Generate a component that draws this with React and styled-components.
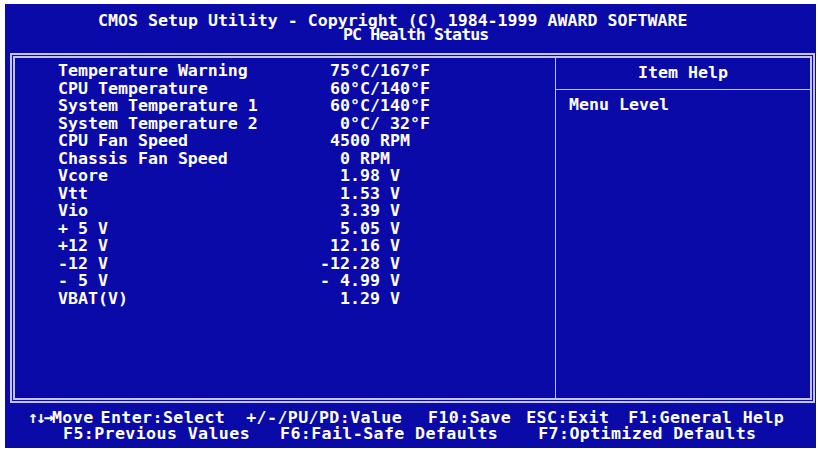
import React from "react";
import styled, { createGlobalStyle } from "styled-components";

const GlobalStyle = createGlobalStyle`
    html, body {
        margin: 0;
        padding: 0;
        background: #ffffff;
    }
`;

const readings = [
    ["Temperature Warning", " 75°C/167°F"],
    ["CPU Temperature", " 60°C/140°F"],
    ["System Temperature 1", " 60°C/140°F"],
    ["System Temperature 2", "  0°C/ 32°F"],
    ["CPU Fan Speed", " 4500 RPM"],
    ["Chassis Fan Speed", "  0 RPM"],
    ["Vcore", "  1.98 V"],
    ["Vtt", "  1.53 V"],
    ["Vio", "  3.39 V"],
    ["+ 5 V", "  5.05 V"],
    ["+12 V", " 12.16 V"],
    ["-12 V", "-12.28 V"],
    ["- 5 V", "- 4.99 V"],
    ["VBAT(V)", "  1.29 V"],
];

// [text, space before it]
const footerTop = [
    ["Enter:Select", 7],
    ["+/-/PU/PD:Value", 21],
    ["F10:Save", 26],
    ["ESC:Exit", 15],
    ["F1:General Help", 19],
];

const footerBottom = [
    ["F5:Previous Values", 58],
    ["F6:Fail-Safe Defaults", 30],
    ["F7:Optimized Defaults", 40],
];

function App() {
    return (
        <>
            <GlobalStyle />
            <Screen>
                <Header>
                    <TitleLine indent={93}>
                        CMOS Setup Utility - Copyright (C) 1984-1999 AWARD SOFTWARE
                    </TitleLine>
                    <TitleLine indent={338} tight>
                        PC Health Status
                    </TitleLine>
                </Header>
                <Frame>
                    <Readings>
                        {readings.map(([label, value]) => (
                            <Row key={label}>
                                <Label>{label}</Label>
                                <Value>{value}</Value>
                            </Row>
                        ))}
                    </Readings>
                    <HelpPanel>
                        <HelpTitle>Item Help</HelpTitle>
                        <HelpBody>Menu Level</HelpBody>
                    </HelpPanel>
                </Frame>
                <Footer>
                    <KeyRow>
                        <Key space={23}>
                            <Arrows>↑↓→</Arrows>Move
                        </Key>
                        {footerTop.map(([k, space]) => (
                            <Key key={k} space={space}>
                                {k}
                            </Key>
                        ))}
                    </KeyRow>
                    <KeyRow>
                        {footerBottom.map(([k, space]) => (
                            <Key key={k} space={space}>
                                {k}
                            </Key>
                        ))}
                    </KeyRow>
                </Footer>
            </Screen>
        </>
    );
}

export default App;

const Screen = styled.div`
    width: 811px;
    height: 444px;
    margin: 4px 0 0 5px;
    background: #0a0aa8;
    color: #ffffff;
    font-family: "DejaVu Sans Mono", "Liberation Mono", monospace;
    font-weight: bold;
    font-size: 16.6px;
    display: flex;
    flex-direction: column;
    white-space: pre;
`;

const Header = styled.div`
    height: 49px;
    box-sizing: border-box;
    padding-top: 10px;
`;

const TitleLine = styled.div`
    line-height: 13.5px;
    padding-left: ${(p) => p.indent}px;
    letter-spacing: ${(p) => (p.tight ? "-0.9px" : "0")};
`;

const Frame = styled.div`
    margin-left: 5px;
    width: 805px;
    height: 350px;
    box-sizing: border-box;
    border: 5px double #c4c4f4;
    display: grid;
    grid-template-columns: 540px 1fr;
`;

const Readings = styled.div`
    padding: 4px 0 0 43px;
`;

const Row = styled.div`
    display: grid;
    grid-template-columns: 262px auto;
    height: 17.5px;
    line-height: 17.5px;
`;

const Label = styled.span``;

const Value = styled.span``;

const HelpPanel = styled.div`
    border-left: 1px solid #c4c4f4;
    display: flex;
    flex-direction: column;
`;

const HelpTitle = styled.div`
    height: 32px;
    box-sizing: border-box;
    padding-top: 6px;
    line-height: 17.4px;
    text-align: center;
    border-bottom: 1px solid #c4c4f4;
`;

const HelpBody = styled.div`
    padding: 6px 0 0 13px;
    line-height: 17.4px;
`;

const Footer = styled.div`
    padding-top: 7px;
`;

const KeyRow = styled.div`
    display: flex;
    line-height: 16px;
    letter-spacing: 0.4px;
`;

const Key = styled.span`
    margin-left: ${(p) => p.space}px;
`;

const Arrows = styled.span`
    letter-spacing: -2px;
`;
